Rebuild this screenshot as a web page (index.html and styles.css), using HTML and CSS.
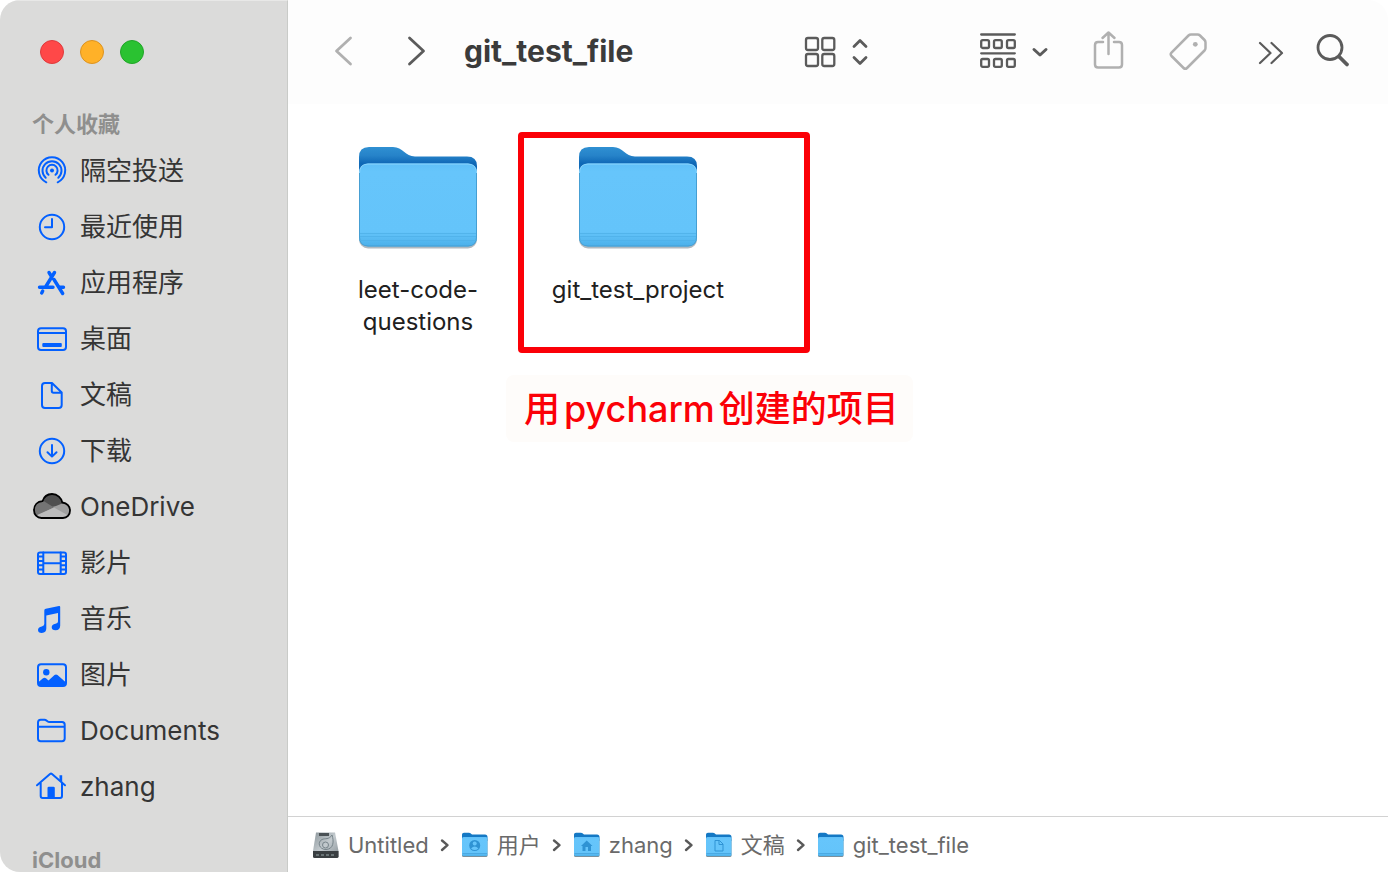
FILE: index.html
```html
<!DOCTYPE html>
<html lang="zh-CN">
<head>
<meta charset="utf-8">
<title>git_test_file</title>
<link rel="stylesheet" href="styles.css">
</head>
<body>
<svg class="defs" aria-hidden="true">
  <defs>
    <linearGradient id="back" x1="0" y1="0" x2="0" y2="1">
      <stop offset="0" stop-color="#2f90d2"/><stop offset=".22" stop-color="#2683c9"/><stop offset=".42" stop-color="#0f68b6"/><stop offset="1" stop-color="#0f6cba"/>
    </linearGradient>
    <linearGradient id="front" x1="0" y1="0" x2="0" y2="1">
      <stop offset="0" stop-color="#5fc0f8"/><stop offset=".1" stop-color="#66c5fb"/><stop offset=".82" stop-color="#64c4fa"/><stop offset="1" stop-color="#4bb0ea"/>
    </linearGradient>
    <linearGradient id="steel" x1="0" y1="0" x2="1" y2="1">
      <stop offset="0" stop-color="#8d979c"/><stop offset=".5" stop-color="#c3cace"/><stop offset="1" stop-color="#8b9499"/>
    </linearGradient>
    <symbol id="folder" viewBox="0 0 120 104">
      <path d="M1 22V11Q1 1 11 1H35C45 1 47 10.500 57 10.500H109Q119 10.500 119 20V40H1Z" fill="url(#back)"/>
      <rect x="1" y="19" width="118" height="83.500" rx="9" fill="#7d8b94" opacity=".6"/>
      <rect x="1" y="17.500" width="118" height="83" rx="9" fill="url(#front)"/>
      <path d="M1.500 27Q1.500 18 10 18H110Q118.500 18 118.500 27" fill="none" stroke="#8bd5fd"/>
      <path d="M1.500 27V91Q1.500 100 10 100H110Q118.500 100 118.500 91V27" fill="none" stroke="#469fd3"/>
      <path d="M2 87.500H118M2 90.500H118M2 94.500H118" stroke="#4fb1e9" opacity=".8"/>
    </symbol>
    <symbol id="mini" viewBox="0 0 28 28">
      <path d="M1 10V3.500Q1 1.800 3 1.800H8Q9.500 1.800 11 3.500H24Q26.500 3.500 26.500 6V10Z" fill="#1478c4"/>
      <rect x="1" y="7" width="25.500" height="19" rx="1.500" fill="#7b909c"/>
      <rect x="1" y="6" width="25.500" height="19" rx="1.500" fill="url(#front)"/>
      <path d="M1.500 22.500H26" stroke="#4aa9e2"/>
    </symbol>
    <symbol id="sep" viewBox="0 0 10 16">
      <path d="M2 3.500L7.500 8.200L2 13" fill="none" stroke="#595959" stroke-width="2.400" stroke-linecap="round" stroke-linejoin="round"/>
    </symbol>
    <clipPath id="cloud"><path d="M9.500 27C5 27 2 23.500 2 19.300C2 14 5.500 10.500 10.500 10.200C12 5.500 16 3 20 3C25.500 3 29.500 7 30.300 11.500C35 12 38 15.500 38 19.500C38 24 35 27 31 27Z"/></clipPath>
  </defs>
</svg>
<div class="window">
  <aside class="sidebar">
    <div class="lights">
      <button class="light red" aria-label="关闭"></button>
      <button class="light amber" aria-label="最小化"></button>
      <button class="light green" aria-label="缩放"></button>
    </div>
    <h2 class="section">个人收藏</h2>
    <nav class="places">
      <a class="place" href="#"><svg class="icon" viewBox="0 0 40 32"><path d="M14.300 27.300A13.200 13.200 0 1 1 25.700 27.300M13.700 22.800A9.500 9.500 0 1 1 26.300 22.800M16.500 19.800A5.600 5.600 0 1 1 23.500 19.800"/><circle class="solid" cx="20" cy="15.500" r="2"/></svg>隔空投送</a>
      <a class="place" href="#"><svg class="icon" viewBox="0 0 40 32"><circle cx="20" cy="16" r="12.200"/><path d="M20 8V16.200H13"/></svg>最近使用</a>
      <a class="place" href="#"><svg class="icon heavy" viewBox="0 0 40 32"><path d="M22.500 5.500L13.500 20M17 5.500L19.500 9.500M10.700 24L9.700 26M22 12.500L30.700 26.500M7.500 20.300H21M28 20.300H31.500"/></svg>应用程序</a>
      <a class="place" href="#"><svg class="icon" viewBox="0 0 40 32"><rect x="6" y="5.300" width="28" height="21.700" rx="3"/><path d="M6 10H34"/><rect class="solid" x="10.300" y="20" width="19.500" height="4" rx="1"/></svg>桌面</a>
      <a class="place" href="#"><svg class="icon" viewBox="0 0 40 32"><path d="M13 4H20L29.700 13.500V26Q29.700 29 26.700 29H13Q10 29 10 26V7Q10 4 13 4ZM19.800 4V12Q19.800 13.700 21.500 13.700H29.500"/></svg>文稿</a>
      <a class="place" href="#"><svg class="icon" viewBox="0 0 40 32"><circle cx="20" cy="16" r="12.200"/><path d="M20 10V21.500M15.500 17.200L20 21.600L24.500 17.200"/></svg>下载</a>
      <a class="place" href="#"><svg class="icon drive" viewBox="0 0 40 32"><g clip-path="url(#cloud)"><path d="M0 0H40V32H0Z" fill="#a0a0a0"/><path d="M8 0H34V11L24 15L20 16L8 10Z" fill="#505050"/><path d="M0 8L10 9L22 16.500L2 26Z" fill="#747474"/><path d="M3 25L22 16.500L38 25.500V30H3Z" fill="#bbb"/></g><path d="M9.500 27C5 27 2 23.500 2 19.300C2 14 5.500 10.500 10.500 10.200C12 5.500 16 3 20 3C25.500 3 29.500 7 30.300 11.500C35 12 38 15.500 38 19.500C38 24 35 27 31 27Z" fill="none" stroke="#000" stroke-width="1.800"/></svg>OneDrive</a>
      <a class="place" href="#"><svg class="icon" viewBox="0 0 40 32"><rect x="6" y="5.500" width="28" height="21.500" rx="2"/><path d="M11.300 5.500V27M28.700 5.500V27M11.300 16.300H28.700M6 9.600H11M6 14H11M6 18.300H11M6 22.600H11M29 9.600H34M29 14H34M29 18.300H34M29 22.600H34"/></svg>影片</a>
      <a class="place" href="#"><svg class="icon" viewBox="0 0 40 32"><path class="solid" d="M12.300 7.500Q12.300 6 13.800 5.700L27 3Q28.200 2.800 28.200 4V22.500Q28.200 27 23.500 27.300Q19.700 27.300 19.700 24.300Q19.700 21.300 23.500 20.700Q26 20.500 26 18.500V10L14.300 12.500V25.500Q14.300 29.700 9.800 30Q6 30 6 27Q6 24 9.800 23.400Q12.300 23 12.300 21Z"/></svg>音乐</a>
      <a class="place" href="#"><svg class="icon" viewBox="0 0 40 32"><rect x="6" y="5.300" width="28" height="21.700" rx="3"/><circle class="solid" cx="14.300" cy="13.300" r="3.200"/><path class="solid" d="M6 23.500L11 19.300Q12.500 18.200 14 19.300L16.500 21.500L22.500 16Q24 14.800 25.500 16L34 23.500V27H6Z"/></svg>图片</a>
      <a class="place" href="#"><svg class="icon" viewBox="0 0 40 32"><path d="M6 7.500Q6 4.700 8.700 4.700H12.500C14.500 4.700 15 7 17 7H30Q32.700 7 32.700 9.700V23.500Q32.700 26.200 30 26.200H8.700Q6 26.200 6 23.500ZM6 11.700H32.700"/></svg>Documents</a>
      <a class="place" href="#"><svg class="icon" viewBox="0 0 40 32"><path d="M5 14.300L18 3Q19 2.200 20 3L33 14.300M8.700 12V25Q8.700 27 10.700 27H28Q30 27 30 25V12"/><path class="solid" d="M15.500 27V17Q15.500 15.700 16.800 15.700H21.500Q22.800 15.700 22.800 17V27ZM27.500 9V4.200H30.200V11Z"/></svg>zhang</a>
    </nav>
    <h2 class="section">iCloud</h2>
  </aside>
  <main class="main">
    <header class="toolbar">
      <div class="history">
        <button class="tool faint" aria-label="后退"><svg width="20" height="40"><path d="M16.500 6L2.500 19L16.500 32"/></svg></button>
        <button class="tool" aria-label="前进"><svg width="20" height="40"><path d="M3.500 6L17.500 19L3.500 32"/></svg></button>
      </div>
      <h1 class="title">git_test_file</h1>
      <div class="views">
        <button class="tool" aria-label="显示方式"><svg width="64" height="40"><g stroke-width="2.300"><rect x="2" y="6" width="12" height="12" rx="2"/><rect x="18.300" y="6" width="12" height="12" rx="2"/><rect x="2" y="22" width="12" height="12" rx="2"/><rect x="18.300" y="22" width="12" height="12" rx="2"/></g><path d="M50 14.500L56 8.500L62 14.500M50 25.500L56 31.500L62 25.500"/></svg></button>
        <div class="actions">
          <button class="tool" aria-label="分组"><svg width="68" height="40"><g stroke-width="2.300"><path d="M1.200 2.500H34.800M1.200 21.300H34.800"/><rect x="1.200" y="8.200" width="7.800" height="7.800" rx="1.500"/><rect x="14" y="8.200" width="7.800" height="7.800" rx="1.500"/><rect x="27" y="8.200" width="7.800" height="7.800" rx="1.500"/><rect x="1.200" y="27" width="7.800" height="7.800" rx="1.500"/><rect x="14" y="27" width="7.800" height="7.800" rx="1.500"/><rect x="27" y="27" width="7.800" height="7.800" rx="1.500"/></g><path d="M54 17.500L60 23L66 17.500" stroke-width="3"/></svg></button>
          <button class="tool faint" aria-label="共享"><svg width="32" height="40"><path d="M11 10H6Q3 10 3 13V32.500Q3 35.500 6 35.500H27Q30 35.500 30 32.500V13Q30 10 27 10H22M16.500 1V22M10.500 6L16.500 .5L22.500 6" stroke-width="2.500"/></svg></button>
          <button class="tool faint" aria-label="标签"><svg width="40" height="40"><path d="M23 2.500H29.500Q31 2.500 32 3.500L36.500 8Q37.500 9 37.500 10.500V16Q37.500 17.500 36.500 18.500L19 36Q17.300 37.700 15.600 36L3.500 24Q1.800 22.300 3.500 20.600L20.500 3.500Q21.500 2.500 23 2.500Z" stroke-width="2.500"/><circle cx="27.300" cy="12.300" r="2.400" fill="#b0b0b0" stroke="none"/></svg></button>
        </div>
        <div class="extras">
          <button class="tool" aria-label="更多"><svg width="26" height="40"><path d="M2 11L12.500 21L2 31M13.500 11L24 21L13.500 31" stroke-width="2.200"/></svg></button>
          <button class="tool" aria-label="搜索"><svg width="34" height="40"><circle cx="14" cy="15.500" r="12"/><path d="M23.500 25L31 32.500" stroke-width="3.800"/></svg></button>
        </div>
      </div>
    </header>
    <section class="files">
      <a class="file" href="#"><svg class="folder"><use href="#folder"/></svg><span>leet-code-<br>questions</span></a>
      <a class="file" href="#"><svg class="folder"><use href="#folder"/></svg><span>git_test_project</span></a>
      <div class="frame"></div>
      <p class="note">用<span class="latin">pycharm</span>创建的项目</p>
    </section>
    <footer class="pathbar">
      <a class="crumb" href="#"><svg class="mini" viewBox="0 0 28 28"><path d="M4 1.500H23L26.500 20V26H1V20Z" fill="url(#steel)"/><path d="M1 20H26.500V25.500Q26.500 27 25 27H2.500Q1 27 1 25.500Z" fill="#3a3f42"/><path d="M4 24H24" stroke="#9aa" stroke-dasharray="3 2"/><path d="M7 2H17V5H7Z" fill="#4b5256"/><path d="M20 4C22 10 22 18 14 18.500C7 18.500 5 11 10 8.500C13 7 17 9 20 4" fill="none" stroke="#77848a"/><circle cx="13.500" cy="14" r="3" fill="none" stroke="#77848a"/></svg>Untitled</a>
      <svg class="sep"><use href="#sep"/></svg>
      <a class="crumb" href="#"><svg class="mini" viewBox="0 0 28 28"><use href="#mini"/><circle cx="13.700" cy="14.500" r="5.500" fill="#2f93d4"/><circle cx="13.700" cy="12.500" r="2" fill="#66c5fb"/><path d="M10 17.500Q13.700 13.500 17.400 17.500Q13.700 20.500 10 17.500Z" fill="#66c5fb"/></svg>用户</a>
      <svg class="sep"><use href="#sep"/></svg>
      <a class="crumb" href="#"><svg class="mini" viewBox="0 0 28 28"><use href="#mini"/><path d="M8 15L13.700 9.500L19.500 15H18V20H15V16H12.500V20H9.500V15Z" fill="#2f93d4"/></svg>zhang</a>
      <svg class="sep"><use href="#sep"/></svg>
      <a class="crumb" href="#"><svg class="mini" viewBox="0 0 28 28"><use href="#mini"/><path d="M10 9.500H14.500L18 13V20H10ZM14 9.500V13.500H18" fill="none" stroke="#2f93d4"/></svg>文稿</a>
      <svg class="sep"><use href="#sep"/></svg>
      <a class="crumb" href="#"><svg class="mini" viewBox="0 0 28 28"><use href="#mini"/></svg>git_test_file</a>
    </footer>
  </main>
</div>
</body>
</html>
```
FILE: styles.css
```css
* {
  box-sizing: border-box;
}

body {
  margin: 0;
  background: #fff;
  font-family: Inter, "Noto Sans CJK SC", sans-serif;
}

a {
  color: inherit;
  text-decoration: none;
}

h1, h2, p {
  margin: 0;
}

button {
  padding: 0;
  border: 0;
  background: none;
}

svg {
  display: block;
  flex: none;
  overflow: visible;
}

.defs {
  position: absolute;
  width: 0;
  height: 0;
}

.window {
  display: flex;
  min-height: 100vh;
  border-radius: 20px;
  overflow: hidden;
  background: #fff;
}

.sidebar {
  flex: none;
  width: 288px;
  padding-top: 39px;
  border-top: 1px solid #e8e8e7;
  border-right: 1px solid #c9cbc8;
  background: #dbdbda;
}

.lights {
  display: flex;
  gap: 16px;
  padding: 0 40px;
  margin-bottom: 48px;
}

.light {
  width: 24px;
  height: 24px;
  border: 1px solid;
  border-radius: 50%;
}

.red { background: #ff4848; border-color: #de3a3c; }
.amber { background: #ffb128; border-color: #dc9320; }
.green { background: #2ac231; border-color: #20a527; }

.section {
  padding-left: 32px;
  font-size: 22px;
  line-height: 24px;
  font-weight: 700;
  color: #8f8f8e;
}

.places {
  display: flex;
  flex-direction: column;
  margin: 7px 0 33px;
}

.place {
  display: flex;
  align-items: center;
  gap: 8px;
  height: 56px;
  padding-left: 32px;
  font-size: 26px;
  line-height: 30px;
  color: #353535;
}

.icon {
  width: 40px;
  height: 32px;
  fill: none;
  stroke: #0360ff;
  stroke-width: 2;
  stroke-linecap: round;
  stroke-linejoin: round;
}

.icon .solid {
  fill: #0360ff;
  stroke: none;
}

.heavy {
  stroke-width: 3.4;
}

.drive {
  stroke: none;
}

.main {
  flex: 1;
  min-width: 0;
  display: flex;
  flex-direction: column;
}

.toolbar {
  display: flex;
  align-items: center;
  height: 104px;
  padding: 0 38px 0 46px;
  background: #fdfdfd;
}

.history {
  display: flex;
  gap: 52px;
}

.tool svg {
  fill: none;
  stroke: #5b5b5b;
  stroke-width: 2.8;
  stroke-linecap: round;
  stroke-linejoin: round;
}

.faint svg {
  stroke: #b0b0b0;
}

.title {
  margin-left: 38px;
  padding-bottom: 2px;
  font-size: 30px;
  line-height: 40px;
  font-weight: 700;
  color: #3b3b3b;
}

.views {
  display: flex;
  margin-left: auto;
}

.actions {
  display: flex;
  gap: 44px;
  margin: 0 50px 0 112px;
}

.extras {
  display: flex;
  gap: 32px;
}

.files {
  position: relative;
  flex: 1;
  display: flex;
  align-items: flex-start;
  padding: 42px 20px 0;
}

.file {
  display: flex;
  flex-direction: column;
  align-items: center;
  gap: 24px;
  width: 220px;
  font-size: 24px;
  line-height: 32px;
  text-align: center;
  color: #202020;
}

.folder {
  width: 120px;
  height: 104px;
}

.frame {
  position: absolute;
  left: 230px;
  top: 28px;
  width: 292px;
  height: 221px;
  border: 6px solid #fb0007;
  border-radius: 4px;
}

.note {
  position: absolute;
  left: 218px;
  top: 271px;
  padding: 8px 14px 6px 18px;
  border-radius: 8px;
  background: #fefcfa;
  font-size: 36px;
  font-weight: 500;
  line-height: 53px;
  white-space: nowrap;
  color: #fb0007;
}

.latin {
  padding: 0 4px;
}

.pathbar {
  display: flex;
  align-items: center;
  gap: 11px;
  height: 56px;
  padding-left: 24px;
  border-top: 1px solid #d2d2d2;
  font-size: 22px;
  line-height: 26px;
  color: #6a6a6a;
}

.crumb {
  display: flex;
  align-items: center;
  gap: 8px;
}

.mini {
  width: 28px;
  height: 28px;
}

.sep {
  width: 10px;
  height: 16px;
}
```
